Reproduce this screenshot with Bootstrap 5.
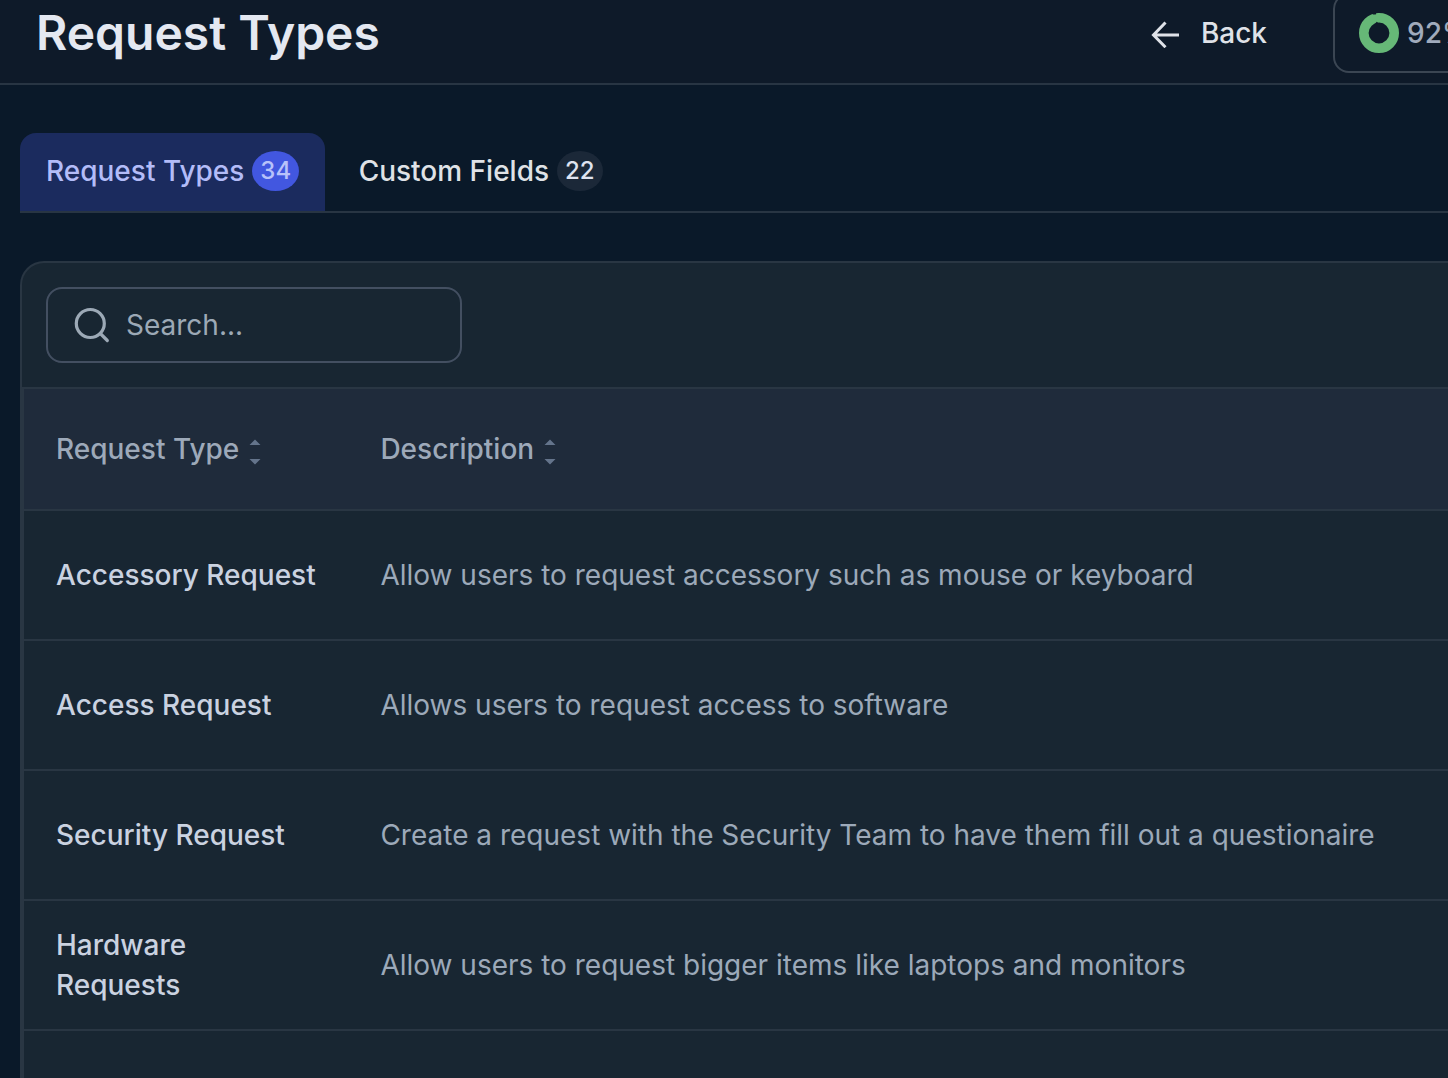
<!DOCTYPE html>
<html lang="en" data-bs-theme="dark">
<head>
<meta charset="utf-8">
<title>Request Types</title>
<link href="https://cdn.jsdelivr.net/npm/bootstrap@5.3.0/dist/css/bootstrap.min.css" rel="stylesheet">
<style>
  body { background: #0a1929; font-family: Inter, "Liberation Sans", sans-serif; font-size: 28px; line-height: 40px; height: 1078px; font-optical-sizing: none; }
  .topbar { height: 85px; background: #0e1a29; border-bottom: 2px solid #283543; padding-left: 36px; }
  .page-title { font-size: 48px; line-height: 56px; font-weight: 600; color: #e4e8f1; margin-top: 5px; }
  .back-link { color: #dfe2e8; font-weight: 500; margin-left: auto; height: 40px; margin-top: 13px; gap: 20px; }
  .score-pill { width: 180px; height: 80px; margin: -7px -65px 0 66px; border: 2px solid #3b4653; border-radius: 16px; padding-left: 24px; gap: 8px; color: #a0abbc; font-weight: 500; }
  .section-tabs { margin: 48px 0 0 20px; height: 80px; border-bottom: 2px solid #283543; gap: 7.5px; }
  .section-tabs .nav-link { height: 78px; padding: 0 26px 2px; border: 0; border-radius: 16px 16px 0 0; color: #dfe2e6; font-weight: 500; gap: 8px; }
  .section-tabs .nav-link.active { background: #1b2b5e; color: #b3bcf8; }
  .tally { font-size: 24px; height: 40px; padding: 0 8px; border-radius: 50%; background: #1b2838; color: #dfe3f0; }
  .active .tally { background: #4257e0; color: #b8c2fa; }
  .panel { margin: 48px 0 0 20px; height: 817px; border: 2px solid #293643; border-right: 0; border-bottom: 0; border-radius: 24px 0 0 0; background: #182632; }
  .panel-tools { padding: 24px; height: 124px; }
  .search-box { width: 416px; height: 76px; border: 2px solid #434f61; border-radius: 16px; padding-left: 26px; gap: 16px; }
  .search-box input { background: none; border: 0; outline: 0; padding: 0; width: 300px; color: #9ca9b6; }
  .search-box input::placeholder { color: #9ca9b6; opacity: 1; }
  .request-grid { height: 691px; border-top: 2px solid #293643; border-left: 2px solid #293643; }
  .grid-line { height: 130px; border-bottom: 2px solid #293643; padding-left: 32px; }
  .grid-head { height: 122px; background: #1f2b3b; font-weight: 500; }
  .cell-name { width: 324.4px; padding-right: 60px; color: #cad2e0; font-weight: 500; }
  .cell-text { color: #9ca9b9; }
  .grid-head .cell-name, .grid-head .cell-text { color: #9da9b9; padding: 0; gap: 10px; }
  .grid-head svg { margin-top: 6px; }
</style>
<script src="https://cdn.jsdelivr.net/npm/bootstrap@5.3.0/dist/js/bootstrap.bundle.min.js"></script>
</head>
<body class="overflow-hidden">
<header class="topbar d-flex overflow-hidden">
  <h1 class="page-title mb-0 text-nowrap">Request Types</h1>
  <a class="back-link d-flex align-items-center text-decoration-none" href="#">
    <svg width="30" height="30" viewBox="0 0 30 30" fill="none" stroke="#dfe2e8" stroke-width="3"><path d="M28 17H3M14.5 4.5 2.5 17l12 12.2"/></svg>
    <span>Back</span>
  </a>
  <div class="score-pill d-flex align-items-center flex-shrink-0">
    <svg width="40" height="40" viewBox="0 0 40 40"><circle cx="20" cy="20" r="15.2" fill="none" stroke="#66b877" stroke-width="9.6"/><path d="M13.8 0v1.4L16.5 1.6 17.3 1l-.3-1Z" fill="#0e1a29"/><path d="m16 10.8 1.7-2 1.2.8-.2 1.4Z" fill="#0e1a29"/></svg>
    <span>92%</span>
  </div>
</header>
<nav class="section-tabs nav flex-nowrap">
  <a class="nav-link active d-flex align-items-center" href="#">Request Types <span class="tally">34</span></a>
  <a class="nav-link d-flex align-items-center" href="#">Custom Fields <span class="tally">22</span></a>
</nav>
<main class="panel">
  <div class="panel-tools">
    <label class="search-box d-flex align-items-center">
      <svg width="36" height="36" viewBox="0 0 36 36" fill="none" stroke="#9ca9b6" stroke-width="3.2" stroke-linecap="round"><circle cx="16.3" cy="16.5" r="14"/><path d="m26.3 26.5 7 7"/></svg>
      <input type="text" placeholder="Search...">
    </label>
  </div>
  <div class="request-grid">
    <div class="grid-line grid-head d-flex align-items-center">
      <div class="cell-name d-flex align-items-center">Request Type <svg width="12" height="26" viewBox="0 0 12 26" fill="#64748b"><path d="M.5 6 6 .5 11.5 6ZM.5 20 6 25.5 11.5 20Z"/></svg></div>
      <div class="cell-text d-flex align-items-center">Description <svg width="12" height="26" viewBox="0 0 12 26" fill="#64748b"><path d="M.5 6 6 .5 11.5 6ZM.5 20 6 25.5 11.5 20Z"/></svg></div>
    </div>
    <div class="grid-line d-flex align-items-center"><div class="cell-name">Accessory Request</div><div class="cell-text text-nowrap">Allow users to request accessory such as mouse or keyboard</div></div>
    <div class="grid-line d-flex align-items-center"><div class="cell-name">Access Request</div><div class="cell-text text-nowrap">Allows users to request access to software</div></div>
    <div class="grid-line d-flex align-items-center"><div class="cell-name">Security Request</div><div class="cell-text text-nowrap">Create a request with the Security Team to have them fill out a questionaire</div></div>
    <div class="grid-line d-flex align-items-center"><div class="cell-name">Hardware<br>Requests</div><div class="cell-text text-nowrap">Allow users to request bigger items like laptops and monitors</div></div>
  </div>
</main>
</body>
</html>
